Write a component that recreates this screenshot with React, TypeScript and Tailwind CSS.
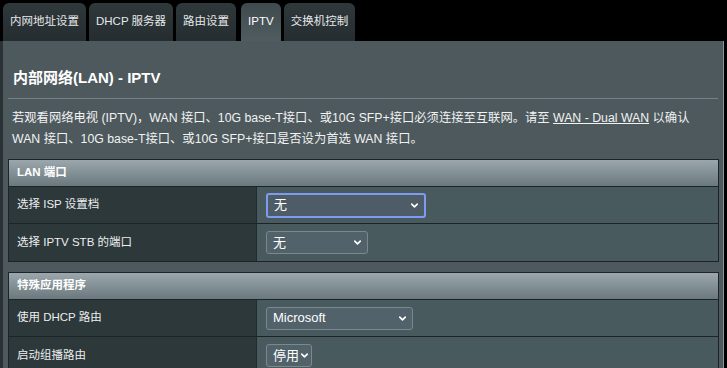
import { ChevronDown } from "lucide-react";

const font = { fontFamily: '"Liberation Sans", "Noto Sans CJK SC", sans-serif' };

const tabs = ["内网地址设置", "DHCP 服务器", "路由设置", "IPTV", "交换机控制"];

function Select({ value, width, focus }: { value: string; width: string; focus?: boolean }) {
  return (
    <div
      className={`flex items-center justify-between whitespace-nowrap rounded-[3px] pl-[6px] pr-[4px] text-[13px] text-white ${width} ${
        focus
          ? "h-[25px] border-2 border-[#7d9cf0] bg-[#4d5c66]"
          : "h-[23px] border border-[#7b888c] bg-[#51626a]"
      }`}
    >
      <span>{value}</span>
      <ChevronDown size={11} strokeWidth={3.5} className="shrink-0 text-white" />
    </div>
  );
}

function Row({ label, children, last }: { label: string; children: React.ReactNode; last?: boolean }) {
  return (
    <div className={`flex h-[37px] ${last ? "" : "border-b border-[#1c2427]"}`}>
      <div className="flex w-[248px] items-center border-r border-[#222b2e] bg-[#2d383b] pl-[8px] text-[11.5px] text-[#eceeee]">
        {label}
      </div>
      <div className="flex flex-1 items-center bg-[#495a5f] pl-[9px]">{children}</div>
    </div>
  );
}

function Header({ title }: { title: string }) {
  return (
    <div className="flex h-[27px] items-center border-b border-[#1c2427] bg-gradient-to-b from-[#9ba7ac] to-[#6b797e] pl-[8px] text-[11.5px] font-bold text-white">
      {title}
    </div>
  );
}

export default function App() {
  return (
    <div style={font} className="h-[368px] w-[727px] overflow-hidden bg-black">
      <div className="flex h-[41px] items-end pl-[3px]">
        {tabs.map((t, i) => (
          <div
            key={t}
            className={`flex h-[38px] items-center rounded-t-[6px] px-[7px] text-[11.5px] ${
              i > 0 ? (t === "IPTV" ? "ml-[5px]" : "ml-[3px]") : ""
            } ${
              t === "IPTV"
                ? "bg-gradient-to-b from-[#3f4a4e] to-[#4f5c60] text-white"
                : "bg-gradient-to-b from-[#2f383b] to-[#252d30] text-[#e6e8e9]"
            }`}
          >
            {t}
          </div>
        ))}
      </div>
      <div className="h-[327px] w-[724px] border-l-[3px] border-r border-[#2a3235] border-r-[#8a9599] bg-[#4d595d] pt-[27px]">
        <div className="pl-[10px] text-[15px] font-bold leading-[20px] text-white">内部网络(LAN) - IPTV</div>
        <div className="mx-[5px] mt-[10px] h-px bg-[#76828a]" />
        <div className="mt-[9px] pl-[9px] text-[12.3px] leading-[21px] text-[#f1f2f2]">
          <div className="whitespace-nowrap">
            若观看网络电视 (IPTV)，WAN 接口、10G base-T接口、或10G SFP+接口必须连接至互联网。请至{" "}
            <span className="underline">WAN - Dual WAN</span> 以确认
          </div>
          <div className="whitespace-nowrap">WAN 接口、10G base-T接口、或10G SFP+接口是否设为首选 WAN 接口。</div>
        </div>
        <div className="ml-[5px] mt-[9px] w-[711px] border border-[#1c2427]">
          <Header title="LAN 端口" />
          <Row label="选择 ISP 设置档">
            <Select value="无" width="w-[160px]" focus />
          </Row>
          <Row label="选择 IPTV STB 的端口" last>
            <Select value="无" width="w-[102px]" />
          </Row>
        </div>
        <div className="ml-[5px] mt-[10px] w-[711px] border border-[#1c2427]">
          <Header title="特殊应用程序" />
          <Row label="使用 DHCP 路由">
            <Select value="Microsoft" width="w-[147px]" />
          </Row>
          <Row label="启动组播路由" last>
            <Select value="停用" width="w-[46px]" />
          </Row>
        </div>
      </div>
    </div>
  );
}
